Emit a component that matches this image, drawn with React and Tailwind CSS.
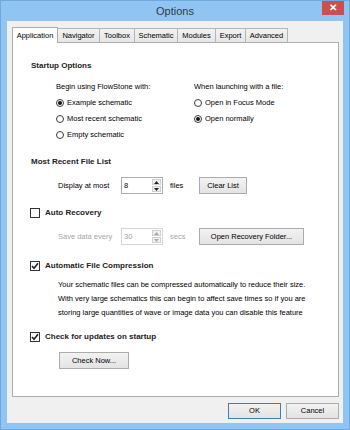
import React from "react";

function Radio({ checked, label }) {
  return (
    <div className="flex h-[16px] items-center">
      <div className="flex h-[8px] w-[8px] items-center justify-center rounded-full border border-[#3c3c3c] bg-white">
        {checked && <div className="h-[4px] w-[4px] rounded-full bg-[#111]" />}
      </div>
      <span className="ml-[3px]">{label}</span>
    </div>
  );
}

function Check({ checked, label }) {
  return (
    <div className="flex h-[16px] items-center pl-[17px]">
      <div className="flex h-[10px] w-[10px] items-center justify-center border border-[#333] bg-white">
        {checked && (
          <svg width="8" height="8" viewBox="0 0 8 8">
            <path d="M1 4 L3 6.3 L7 1.2" stroke="#222" strokeWidth="1.6" fill="none" />
          </svg>
        )}
      </div>
      <span className="ml-[5px] text-[8px] font-bold text-[#222]">{label}</span>
    </div>
  );
}

function Arrow({ up, color }) {
  return (
    <svg width="5" height="3" viewBox="0 0 5 3">
      <path d={up ? "M0 3 L2.5 0 L5 3Z" : "M0 0 L2.5 3 L5 0Z"} fill={color} />
    </svg>
  );
}

function Spin({ value, disabled }) {
  const c = disabled ? "#a8a8a8" : "#222";
  return (
    <div
      className={`flex h-[17px] w-[42px] border bg-white ${
        disabled ? "border-[#d5d5d5]" : "border-[#abadb3]"
      }`}
    >
      <div className={`flex flex-1 items-center pl-[2px] ${disabled ? "text-[#a0a0a0]" : ""}`}>
        {value}
      </div>
      <div className="flex w-[10px] flex-col gap-[1px] py-[1px] pr-[1px]">
        <div className="flex flex-1 items-center justify-center border border-[#cfcfcf] bg-[#f2f2f2]">
          <Arrow up color={c} />
        </div>
        <div className="flex flex-1 items-center justify-center border border-[#cfcfcf] bg-[#f2f2f2]">
          <Arrow color={c} />
        </div>
      </div>
    </div>
  );
}

function Btn({ children, className = "", def }) {
  return (
    <div
      className={`flex items-center justify-center border bg-gradient-to-b from-[#f2f2f2] to-[#e3e3e3] ${
        def ? "border-[#3c7fb1]" : "border-[#acacac]"
      } ${className}`}
    >
      {children}
    </div>
  );
}

export default function App() {
  const tabs = [
    ["Navigator", "w-[43px]"],
    ["Toolbox", "w-[36px]"],
    ["Schematic", "w-[44px]"],
    ["Modules", "w-[39px]"],
    ["Export", "w-[31px]"],
    ["Advanced", "w-[43px]"],
  ];
  return (
    <div className="relative h-[430px] w-[350px] border border-[#6fa8dc] bg-[#90c5f3] font-['Liberation_Sans',Arial,sans-serif] text-[7.5px] text-[#000]">
      {/* title bar */}
      <div className="flex h-[20px] items-center justify-center text-[11px] text-[#2f3b48]">
        Options
      </div>
      <div className="absolute right-[5px] top-0 flex h-[14px] w-[22px] items-center justify-center bg-[#c75050] text-[10px] font-bold leading-none text-white">
        ✕
      </div>

      {/* client */}
      <div className="mx-[6px] flex h-[402px] w-[336px] flex-col bg-[#f0f0f0] pl-[5px]">
        {/* tabs */}
        <div className="mt-[6px] flex h-[15px] items-end">
          <div className="relative z-10 -mb-px flex h-[16px] w-[46px] items-start justify-center border border-b-0 border-[#adadad] bg-white pt-[2px]">
            Application
          </div>
          {tabs.map(([t, w]) => (
            <div
              key={t}
              className={`-ml-px flex h-[14px] items-center justify-center border border-b-0 border-[#b5b5b5] bg-gradient-to-b from-[#f2f2f2] to-[#e6e6e6] ${w}`}
            >
              {t}
            </div>
          ))}
        </div>

        {/* panel */}
        <div className="flex h-[355px] w-[327px] flex-col border border-[#adadad] bg-white">
          <div className="mt-[15px] flex h-[16px] items-center pl-[18px] text-[8px] font-bold text-[#222]">
            Startup Options
          </div>
          <div className="mt-[5px] flex pl-[43px]">
            <div className="flex w-[138px] flex-col">
              <div className="flex h-[16px] items-center">Begin using FlowStone with:</div>
              <Radio checked label="Example schematic" />
              <Radio label="Most recent schematic" />
              <Radio label="Empty schematic" />
            </div>
            <div className="flex flex-col">
              <div className="flex h-[16px] items-center">When launching with a file:</div>
              <Radio label="Open in Focus Mode" />
              <Radio checked label="Open normally" />
            </div>
          </div>

          <div className="mt-[11px] flex h-[16px] items-center pl-[18px] text-[8px] font-bold text-[#222]">
            Most Recent File List
          </div>
          <div className="mt-[7px] flex h-[17px] items-center pl-[45px]">
            <span className="w-[63px]">Display at most</span>
            <Spin value="8" />
            <span className="w-[36px] pl-[7px]">files</span>
            <Btn className="h-[17px] w-[48px]">Clear List</Btn>
          </div>

          <div className="mt-[11px]">
            <Check label="Auto Recovery" />
          </div>
          <div className="mt-[7px] flex h-[17px] items-center pl-[45px]">
            <span className="w-[63px] text-[#a6a6a6]">Save data every</span>
            <Spin value="30" disabled />
            <span className="w-[36px] pl-[7px] text-[#a6a6a6]">secs</span>
            <Btn className="h-[17px] w-[105px]">Open Recovery Folder...</Btn>
          </div>

          <div className="mt-[13px]">
            <Check checked label="Automatic File Compression" />
          </div>
          <div className="mt-[4px] flex flex-col pl-[45px] leading-[14px]">
            <div>Your schematic files can be compressed automatically to reduce their size.</div>
            <div>With very large schematics this can begin to affect save times so if you are</div>
            <div>storing large quantities of wave or image data you can disable this feature</div>
          </div>

          <div className="mt-[9px]">
            <Check checked label="Check for updates on startup" />
          </div>
          <div className="mt-[7px] pl-[46px]">
            <Btn className="h-[17px] w-[70px]">Check Now...</Btn>
          </div>
        </div>

        {/* bottom buttons */}
        <div className="mt-[6px] flex w-[327px] justify-end gap-[5px]">
          <Btn def className="h-[16px] w-[53px]">OK</Btn>
          <Btn className="h-[16px] w-[53px]">Cancel</Btn>
        </div>
      </div>
    </div>
  );
}
